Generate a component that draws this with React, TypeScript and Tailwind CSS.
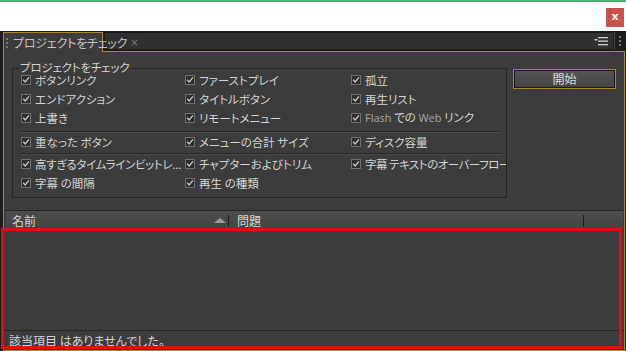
import React from "react";

const CB = () => (
  <svg width="10" height="10" viewBox="0 0 10 10" className="shrink-0">
    <rect x="0.5" y="0.5" width="9" height="9" fill="#2e2e2e" stroke="#707070" />
    <path d="M2.2 4.8 L4.2 7 L8 2.4" stroke="#c8c8c8" strokeWidth="1.3" fill="none" />
  </svg>
);

const Item = ({ children }: { children: React.ReactNode }) => (
  <div className="flex items-center gap-[4px] whitespace-nowrap overflow-x-clip">
    <CB />
    <span className="leading-[14px]">{children}</span>
  </div>
);

const Row = ({ h, items }: { h: string; items: React.ReactNode[] }) => (
  <div className={`grid grid-cols-[164px_166px_1fr] items-center ${h}`}>
    {items.map((it, i) => (
      <div key={i} className="min-w-0 overflow-x-clip">
        {it ? <Item>{it}</Item> : null}
      </div>
    ))}
  </div>
);

const Sep = ({ h }: { h: string }) => (
  <div className={`${h} flex flex-col justify-end pr-[5px]`}>
    <div className="border-t border-[#262626] border-b border-b-[#4a4a4a]" />
  </div>
);

export default function App() {
  return (
    <div className="w-[626px] h-[351px] bg-white relative overflow-hidden font-['Noto_Sans_CJK_JP',sans-serif] [font-feature-settings:'palt'] text-[12px] text-[#d4d4d4]">
      {/* top strip */}
      <div className="h-[31px] border-t-2 border-[#49b06f] flex justify-end items-start pt-[6px] pr-[2px]">
        <div className="w-[18px] h-[19px] bg-[#c9514f] text-white text-[11px] font-bold flex items-center justify-center font-['DejaVu_Sans',sans-serif] leading-none pb-[2px]">
          x
        </div>
      </div>

      {/* panel */}
      <div className="h-[320px] bg-[#1d1d1d] flex flex-col pl-[3px] pr-[1px] pt-[1px]">
        {/* tab bar */}
        <div className="h-[19px] flex shrink-0">
          <div className="relative z-10 w-[100px] h-[20px] border-t border-l border-r border-[#b08622] bg-[#3c3c3c] flex items-center pl-[2px] text-[#c4c4c4]">
            <div className="w-[2px] h-[10px] border-l-2 border-dotted border-[#777] mr-[5px]" />
            <span className="leading-[14px] whitespace-nowrap tracking-[-0.2px]">プロジェクトをチェック</span>
            <span className="ml-[3px] text-[10px] text-[#7a7a7a] leading-none font-['DejaVu_Sans',sans-serif]">×</span>
          </div>
          <div className="flex-1 ml-[1px] mb-[1px] bg-[#303030] border border-[#1a1a1a] flex items-center justify-end pr-[5px]">
            <svg width="14" height="9" viewBox="0 0 14 9">
              <path d="M0 2 L4 2 L2 4 Z" fill="#cfcfcf" />
              <rect x="4" y="0" width="10" height="1.3" fill="#cfcfcf" />
              <rect x="4" y="3.5" width="10" height="1.3" fill="#cfcfcf" />
              <rect x="4" y="7" width="10" height="1.3" fill="#cfcfcf" />
            </svg>
          </div>
          <div className="w-[11px] mb-[1px] flex items-center justify-center border-l border-[#4a4a4a]">
            <div className="w-[2px] h-[10px] border-l-2 border-dotted border-[#777]" />
          </div>
        </div>

        {/* content */}
        <div className="flex-1 border border-[#b08622] bg-[#3c3c3c] flex flex-col">
          <div className="flex items-start pl-[8px] pt-[16px] shrink-0">
            <div className="relative w-[495px] h-[130px] border border-[#252525] pl-[8px] pt-[2px] text-[11.5px]">
              <span className="absolute left-[6px] -top-[9px] h-[14px] px-[1px] bg-[#3c3c3c] leading-[14px] whitespace-nowrap tracking-[-0.2px]">
                プロジェクトをチェック
              </span>
              <Row h="h-[18px]" items={["ボタンリンク", "ファーストプレイ", "孤立"]} />
              <Row h="h-[19px]" items={["エンドアクション", "タイトルボタン", "再生リスト"]} />
              <Row h="h-[19px]" items={["上書き", "リモートメニュー", (
                <>
                  <span className="font-['Open_Sans',sans-serif] text-[#a8a8a8] text-[11px]">Flash</span> での <span className="font-['Open_Sans',sans-serif] text-[#a8a8a8] text-[11px]">Web</span> リンク
                </>
              )]} />
              <Sep h="h-[6px]" />
              <Row h="h-[18px]" items={["重なった ボタン", "メニューの合計 サイズ", "ディスク容量"]} />
              <Sep h="h-[4px]" />
              <Row h="h-[18px]" items={[<span className="tracking-[-0.3px]">高すぎるタイムラインビットレ...</span>, "チャプターおよびトリム", <span className="tracking-[-0.5px]">字幕 テキストのオーバーフロー</span>]} />
              <Row h="h-[20px]" items={["字幕 の間隔", "再生 の種類", null]} />
            </div>
            <div className="ml-[6px] mt-[1px] w-[103px] h-[20px] border border-[#b08622] p-0">
              <div className="w-full h-full border border-[#1a1a1a] bg-gradient-to-b from-[#555555] to-[#444444] flex items-center justify-center text-[#dcdcdc] leading-[14px]">
                開始
              </div>
            </div>
          </div>

          {/* column header */}
          <div className="mt-[12px] ml-[2px] mr-[1px] h-[20px] shrink-0 border-t border-[#262626] bg-gradient-to-b from-[#4d4d4d] to-[#444444] flex items-center">
            <div className="w-[222px] flex items-center justify-between pl-[6px] pr-[2px]">
              <span className="leading-[14px]">名前</span>
              <svg width="12" height="5" viewBox="0 0 12 5">
                <path d="M0 5 L6 0 L12 5 Z" fill="#9a9a9a" />
              </svg>
            </div>
            <div className="w-px h-[12px] bg-[#1e1e1e]" />
            <div className="w-[354px] pl-[8px] leading-[14px]">問題</div>
            <div className="w-px h-[12px] bg-[#1e1e1e]" />
          </div>

          {/* list */}
          <div className="flex-1 bg-[#3c3c3c]" />

          {/* status */}
          <div className="h-[20px] shrink-0 border-t border-[#262626] flex items-center pl-[5px] leading-[14px]">
            該当項目 はありませんでした。
          </div>
        </div>
      </div>

      {/* annotation rectangle */}
      <div className="absolute left-[1px] top-[228px] w-[621px] h-[121px] border-[3px] border-[#e30b0b] pointer-events-none" />
    </div>
  );
}
